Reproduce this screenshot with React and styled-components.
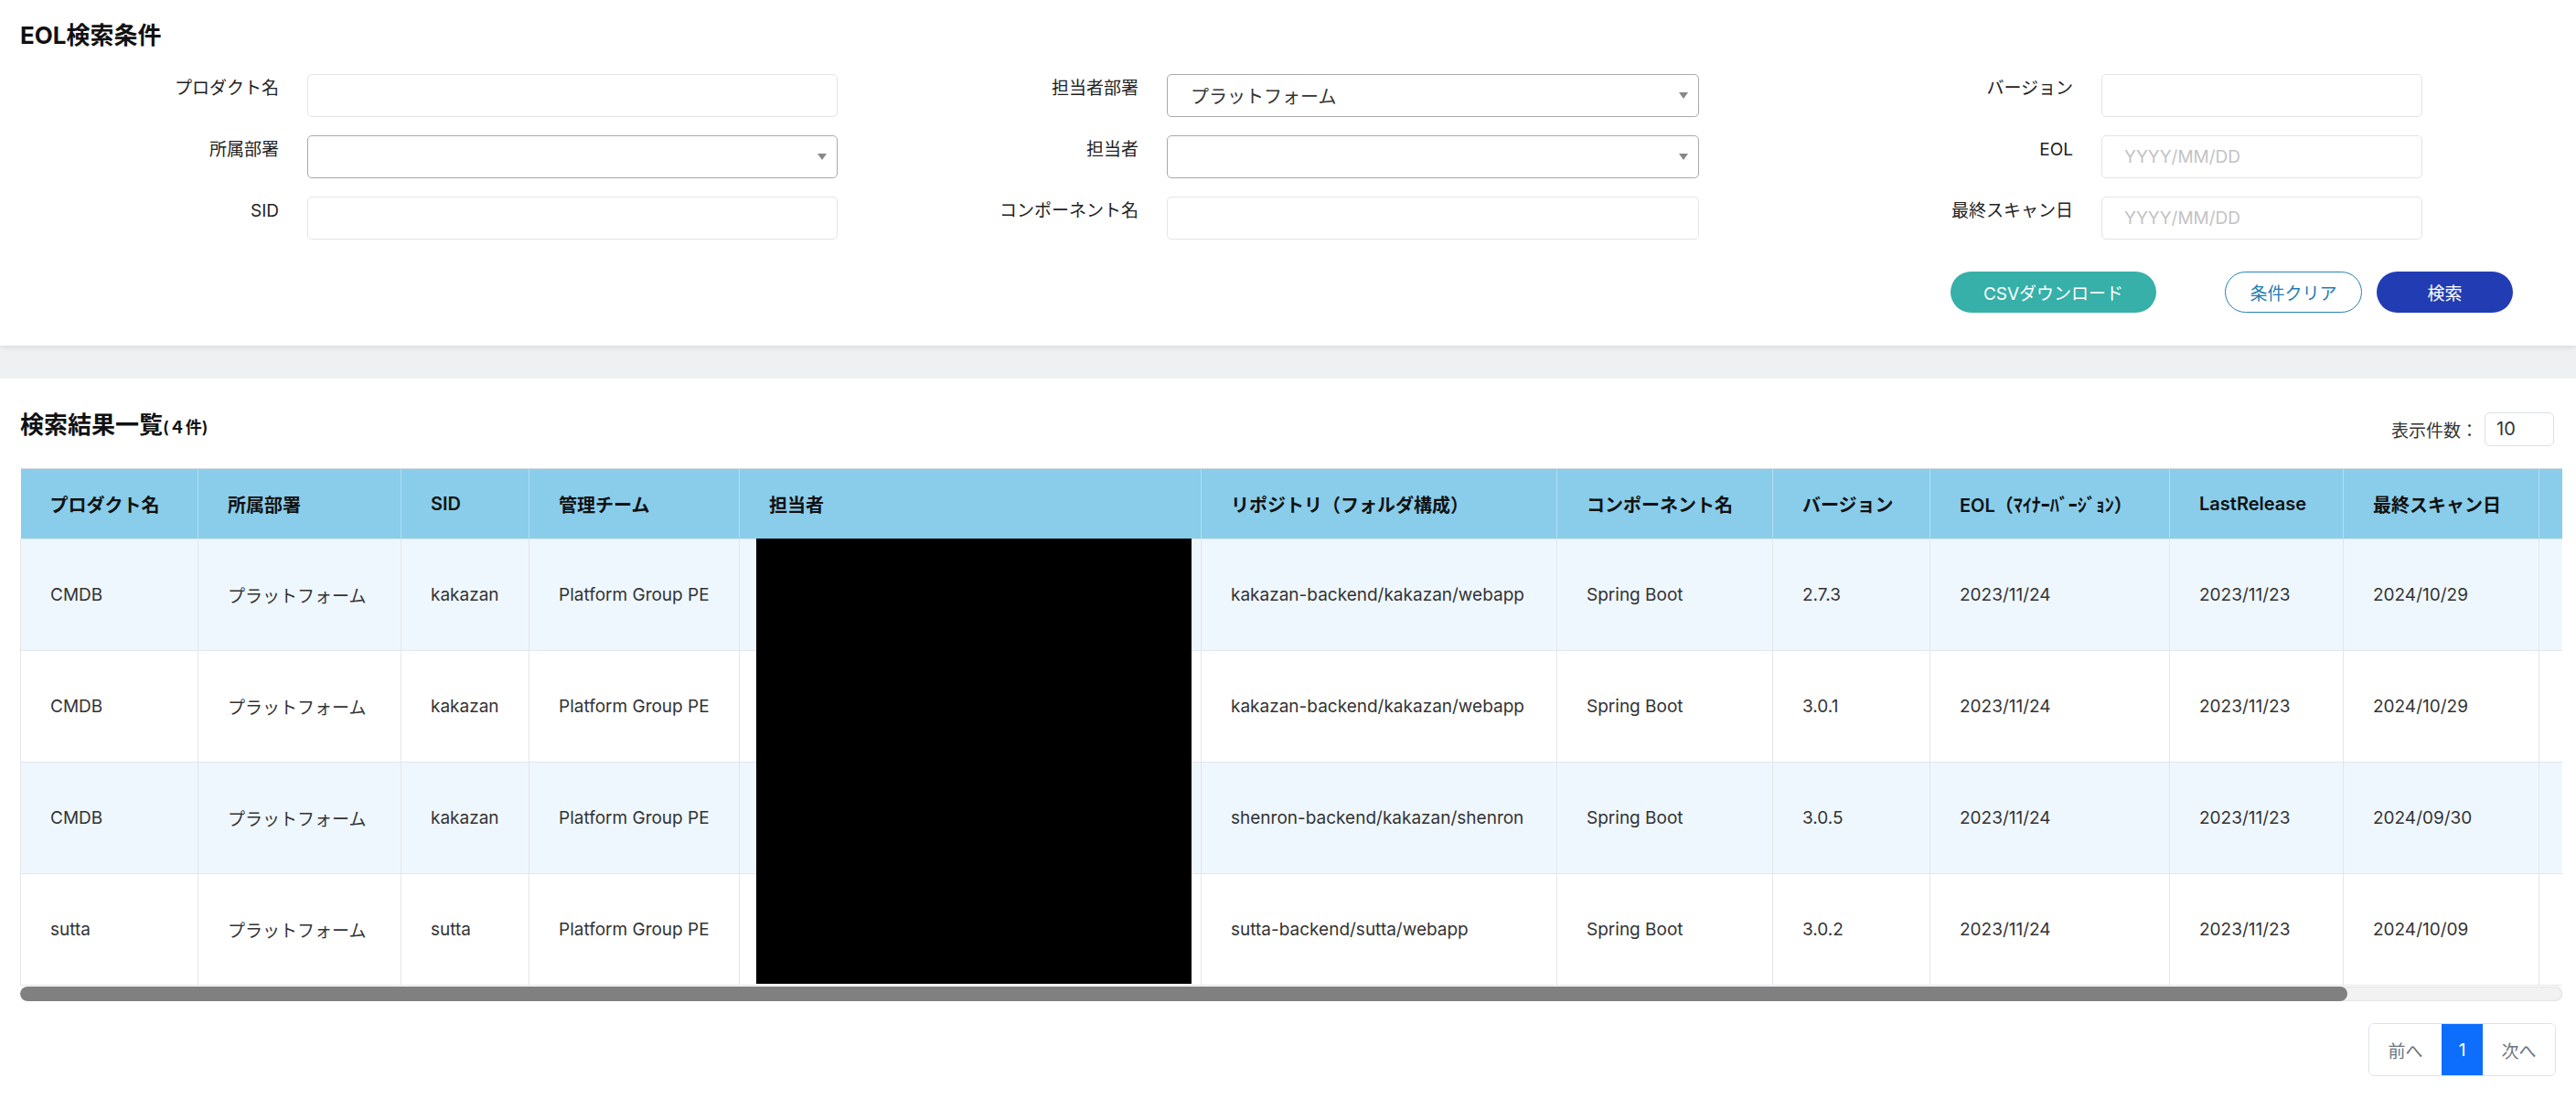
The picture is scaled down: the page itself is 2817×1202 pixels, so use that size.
import React from 'react'
import styled, { createGlobalStyle, css } from 'styled-components'

const GlobalStyle = createGlobalStyle`
  html, body {
    margin: 0;
    padding: 0;
    overflow: hidden;
  }
  body {
    background: #eef0f2;
    font-family: Inter, "Noto Sans CJK JP", sans-serif;
    color: #333;
  }
`

const Page = styled.div`
  min-height: 100vh;
  display: flex;
  flex-direction: column;
  background: #eef0f2;
`

const SearchPanel = styled.section`
  background: #fff;
  padding: 20px 0 36px;
  box-shadow: 0 2px 6px rgba(0, 0, 0, 0.09);
  position: relative;
  z-index: 1;
`

const PanelTitle = styled.h2`
  margin: 0;
  padding-left: 22px;
  font-size: 26px;
  line-height: 38px;
  font-weight: 700;
  color: #111;
`

const FormGrid = styled.div`
  display: flex;
  margin-top: 23px;
`

const FieldColumn = styled.div`
  width: ${p => p.$width}px;
  display: flex;
  flex-direction: column;
  gap: 20px;
`

const FieldRow = styled.div`
  display: grid;
  grid-template-columns: ${p => p.$label}px ${p => p.$input}px;
  column-gap: 31px;
  align-items: start;
`

const FieldLabel = styled.label`
  text-align: right;
  font-size: 19px;
  line-height: 32px;
  color: #222;
  white-space: nowrap;
`

const TextInput = styled.input`
  box-sizing: border-box;
  width: 100%;
  height: 47px;
  border: 1px solid #e2e4e6;
  border-radius: 5px;
  padding: 0 24px;
  font-family: inherit;
  font-size: 19px;
  color: #333;
  outline: none;
  &::placeholder {
    color: #c3c3c3;
  }
`

const SelectBox = styled.div`
  box-sizing: border-box;
  height: 47px;
  border: 1px solid #a9a9a9;
  border-radius: 5px;
  padding: 0 11px 0 25px;
  display: flex;
  align-items: center;
  justify-content: space-between;
  font-size: 20px;
  color: #333;
`

const Caret = styled.span`
  width: 0;
  height: 0;
  border-left: 5px solid transparent;
  border-right: 5px solid transparent;
  border-top: 7px solid #888;
`

const ButtonRow = styled.div`
  display: flex;
  justify-content: flex-end;
  margin-top: 35px;
  padding-right: 69px;
`

const variants = {
  teal: css`
    background: #36b0a8;
    border: none;
    color: #fff;
    margin-right: 75px;
  `,
  outline: css`
    background: #fff;
    border: 1.5px solid #2682b6;
    color: #1f7cb4;
    margin-right: 16px;
  `,
  primary: css`
    background: #223cb4;
    border: none;
    color: #fff;
  `,
}

const ActionButton = styled.button`
  box-sizing: border-box;
  width: ${p => p.$width}px;
  height: 45px;
  border-radius: 23px;
  font-family: inherit;
  font-size: 19px;
  cursor: pointer;
  ${p => variants[p.$variant]}
`

const ResultPanel = styled.section`
  flex: 1;
  margin-top: 36px;
  background: #fff;
  padding: 32px 15px 0 22px;
`

const ResultHeader = styled.div`
  display: flex;
  justify-content: space-between;
  align-items: center;
  height: 46px;
  padding-right: 9px;
`

const ResultTitle = styled.h2`
  margin: 0 0 6px;
  font-size: 26px;
  line-height: 36px;
  font-weight: 700;
  color: #111;
`

const Count = styled.span`
  font-size: 18px;
  font-weight: 600;
`

const PageSize = styled.div`
  display: flex;
  align-items: center;
  gap: 7px;
  font-size: 19px;
  color: #333;
`

const PageSizeBox = styled.div`
  box-sizing: border-box;
  width: 76px;
  height: 37px;
  border: 1px solid #dcdfe2;
  border-radius: 6px;
  padding-left: 12px;
  display: flex;
  align-items: center;
  font-size: 20px;
`

const TableScroll = styled.div`
  margin-top: 20px;
  overflow: hidden;
`

const TableInner = styled.div`
  position: relative;
  width: ${p => p.$width}px;
`

const Table = styled.table`
  width: 100%;
  table-layout: fixed;
  border-collapse: collapse;
`

const HeadCell = styled.th`
  height: 76px;
  padding: 0 32px;
  background: #89cdea;
  border-top: 1px solid #d5dde2;
  border-right: 1px solid #b4def0;
  text-align: left;
  font-size: 20px;
  font-weight: 600;
  color: #111;
  white-space: nowrap;
`

const BodyRow = styled.tr`
  background: ${p => (p.$striped ? '#eff7fe' : '#fff')};
`

const Cell = styled.td`
  height: 121px;
  padding: 0 32px;
  border: 1px solid #e3e6ea;
  font-size: 19px;
  color: #333;
  white-space: nowrap;
`

const Redaction = styled.div`
  position: absolute;
  top: 77px;
  left: 805px;
  width: 476px;
  height: 487px;
  background: #000;
`

const ScrollTrack = styled.div`
  height: 16px;
  margin-top: 1px;
  border-radius: 8px;
  background: #f2f2f2;
  box-shadow: inset 0 0 2px rgba(0, 0, 0, 0.2);
  overflow: hidden;
`

const ScrollThumb = styled.div`
  height: 100%;
  border-radius: 8px;
  background: #808080;
`

const PagerRow = styled.div`
  display: flex;
  justify-content: flex-end;
  margin-top: 24px;
  padding-right: 7px;
`

const Pager = styled.div`
  display: flex;
  height: 56px;
  border: 1px solid #dee2e6;
  border-radius: 6px;
  overflow: hidden;
`

const PagerItem = styled.div`
  width: ${p => p.$width}px;
  display: flex;
  align-items: center;
  justify-content: center;
  font-size: 19px;
  color: ${p => (p.$active ? '#fff' : '#6c757d')};
  background: ${p => (p.$active ? '#0d6efd' : '#fff')};
`

const columns = [
  ['プロダクト名', 194],
  ['所属部署', 222],
  ['SID', 140],
  ['管理チーム', 230],
  ['担当者', 505],
  ['リポジトリ（フォルダ構成）', 389],
  ['コンポーネント名', 236],
  ['バージョン', 172],
  ['EOL（ﾏｲﾅｰﾊﾞｰｼﾞｮﾝ）', 262],
  ['LastRelease', 190],
  ['最終スキャン日', 214],
  ['', 283],
]

const tableWidth = columns.reduce((sum, [, w]) => sum + w, 0)
const viewWidth = 2780

const rows = [
  ['CMDB', 'プラットフォーム', 'kakazan', 'Platform Group PE', '', 'kakazan-backend/kakazan/webapp', 'Spring Boot', '2.7.3', '2023/11/24', '2023/11/23', '2024/10/29', ''],
  ['CMDB', 'プラットフォーム', 'kakazan', 'Platform Group PE', '', 'kakazan-backend/kakazan/webapp', 'Spring Boot', '3.0.1', '2023/11/24', '2023/11/23', '2024/10/29', ''],
  ['CMDB', 'プラットフォーム', 'kakazan', 'Platform Group PE', '', 'shenron-backend/kakazan/shenron', 'Spring Boot', '3.0.5', '2023/11/24', '2023/11/23', '2024/09/30', ''],
  ['sutta', 'プラットフォーム', 'sutta', 'Platform Group PE', '', 'sutta-backend/sutta/webapp', 'Spring Boot', '3.0.2', '2023/11/24', '2023/11/23', '2024/10/09', ''],
]

const formColumns = [
  {
    width: 939, label: 305, input: 580,
    fields: [
      { label: 'プロダクト名', type: 'text' },
      { label: '所属部署', type: 'select', value: '' },
      { label: 'SID', type: 'text' },
    ],
  },
  {
    width: 939, label: 306, input: 582,
    fields: [
      { label: '担当者部署', type: 'select', value: 'プラットフォーム' },
      { label: '担当者', type: 'select', value: '' },
      { label: 'コンポーネント名', type: 'text' },
    ],
  },
  {
    width: 939, label: 389, input: 351,
    fields: [
      { label: 'バージョン', type: 'text' },
      { label: 'EOL', type: 'text', placeholder: 'YYYY/MM/DD' },
      { label: '最終スキャン日', type: 'text', placeholder: 'YYYY/MM/DD' },
    ],
  },
]

const App = () => {
  const thumbPct = (viewWidth / tableWidth) * 100

  return (
    <Page>
      <GlobalStyle />
      <SearchPanel>
        <PanelTitle>EOL検索条件</PanelTitle>
        <FormGrid>
          {formColumns.map((col, i) => (
            <FieldColumn key={i} $width={col.width}>
              {col.fields.map(f => (
                <FieldRow key={f.label} $label={col.label} $input={col.input}>
                  <FieldLabel>{f.label}</FieldLabel>
                  {f.type === 'select' ? (
                    <SelectBox>
                      <span>{f.value}</span>
                      <Caret />
                    </SelectBox>
                  ) : (
                    <TextInput placeholder={f.placeholder} />
                  )}
                </FieldRow>
              ))}
            </FieldColumn>
          ))}
        </FormGrid>
        <ButtonRow>
          <ActionButton $variant="teal" $width={225}>CSVダウンロード</ActionButton>
          <ActionButton $variant="outline" $width={150}>条件クリア</ActionButton>
          <ActionButton $variant="primary" $width={149}>検索</ActionButton>
        </ButtonRow>
      </SearchPanel>

      <ResultPanel>
        <ResultHeader>
          <ResultTitle>
            検索結果一覧<Count>(４件)</Count>
          </ResultTitle>
          <PageSize>
            表示件数：
            <PageSizeBox>10</PageSizeBox>
          </PageSize>
        </ResultHeader>

        <TableScroll>
          <TableInner $width={tableWidth}>
            <Table>
              <colgroup>
                {columns.map(([, w], i) => (
                  <col key={i} style={{ width: w }} />
                ))}
              </colgroup>
              <thead>
                <tr>
                  {columns.map(([name], i) => (
                    <HeadCell key={i}>{name}</HeadCell>
                  ))}
                </tr>
              </thead>
              <tbody>
                {rows.map((r, i) => (
                  <BodyRow key={i} $striped={i % 2 === 0}>
                    {r.map((v, j) => (
                      <Cell key={j}>{v}</Cell>
                    ))}
                  </BodyRow>
                ))}
              </tbody>
            </Table>
            <Redaction />
          </TableInner>
        </TableScroll>
        <ScrollTrack>
          <ScrollThumb style={{ width: `${thumbPct}%` }} />
        </ScrollTrack>

        <PagerRow>
          <Pager>
            <PagerItem $width={79}>前へ</PagerItem>
            <PagerItem $width={45} $active>1</PagerItem>
            <PagerItem $width={79}>次へ</PagerItem>
          </Pager>
        </PagerRow>
      </ResultPanel>
    </Page>
  )
}

export default App
